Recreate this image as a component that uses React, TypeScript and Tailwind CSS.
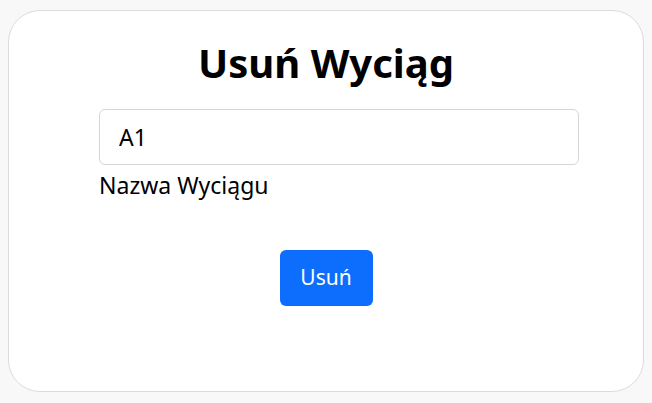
export default function App() {
  return (
    <div className="min-h-[403px] bg-[#f8f8f8] px-2 py-[10px] font-['Segoe_UI','Noto_Sans',sans-serif] text-[#212529]">
      <div className="flex h-[382px] flex-col items-center rounded-[32px] border border-[#dcdcdc] bg-white pt-[28px]">
        <h1 className="text-[40px] font-bold leading-[1.2] text-black">Usuń Wyciąg</h1>
        <div className="mt-[22px] ml-[26px] w-[480px]">
          <input
            className="h-[56px] w-full rounded-[6px] border border-[#d6d6d6] px-[19px] text-[23px] text-black outline-none"
            defaultValue="A1"
          />
          <label className="mt-[4px] block text-[23px] leading-[1.4] text-black">Nazwa Wyciągu</label>
        </div>
        <button className="mt-[49px] h-[56px] w-[93px] rounded-[6px] bg-[#0d6efd] text-[21px] text-white" type="button">
          Usuń
        </button>
      </div>
    </div>
  );
}
